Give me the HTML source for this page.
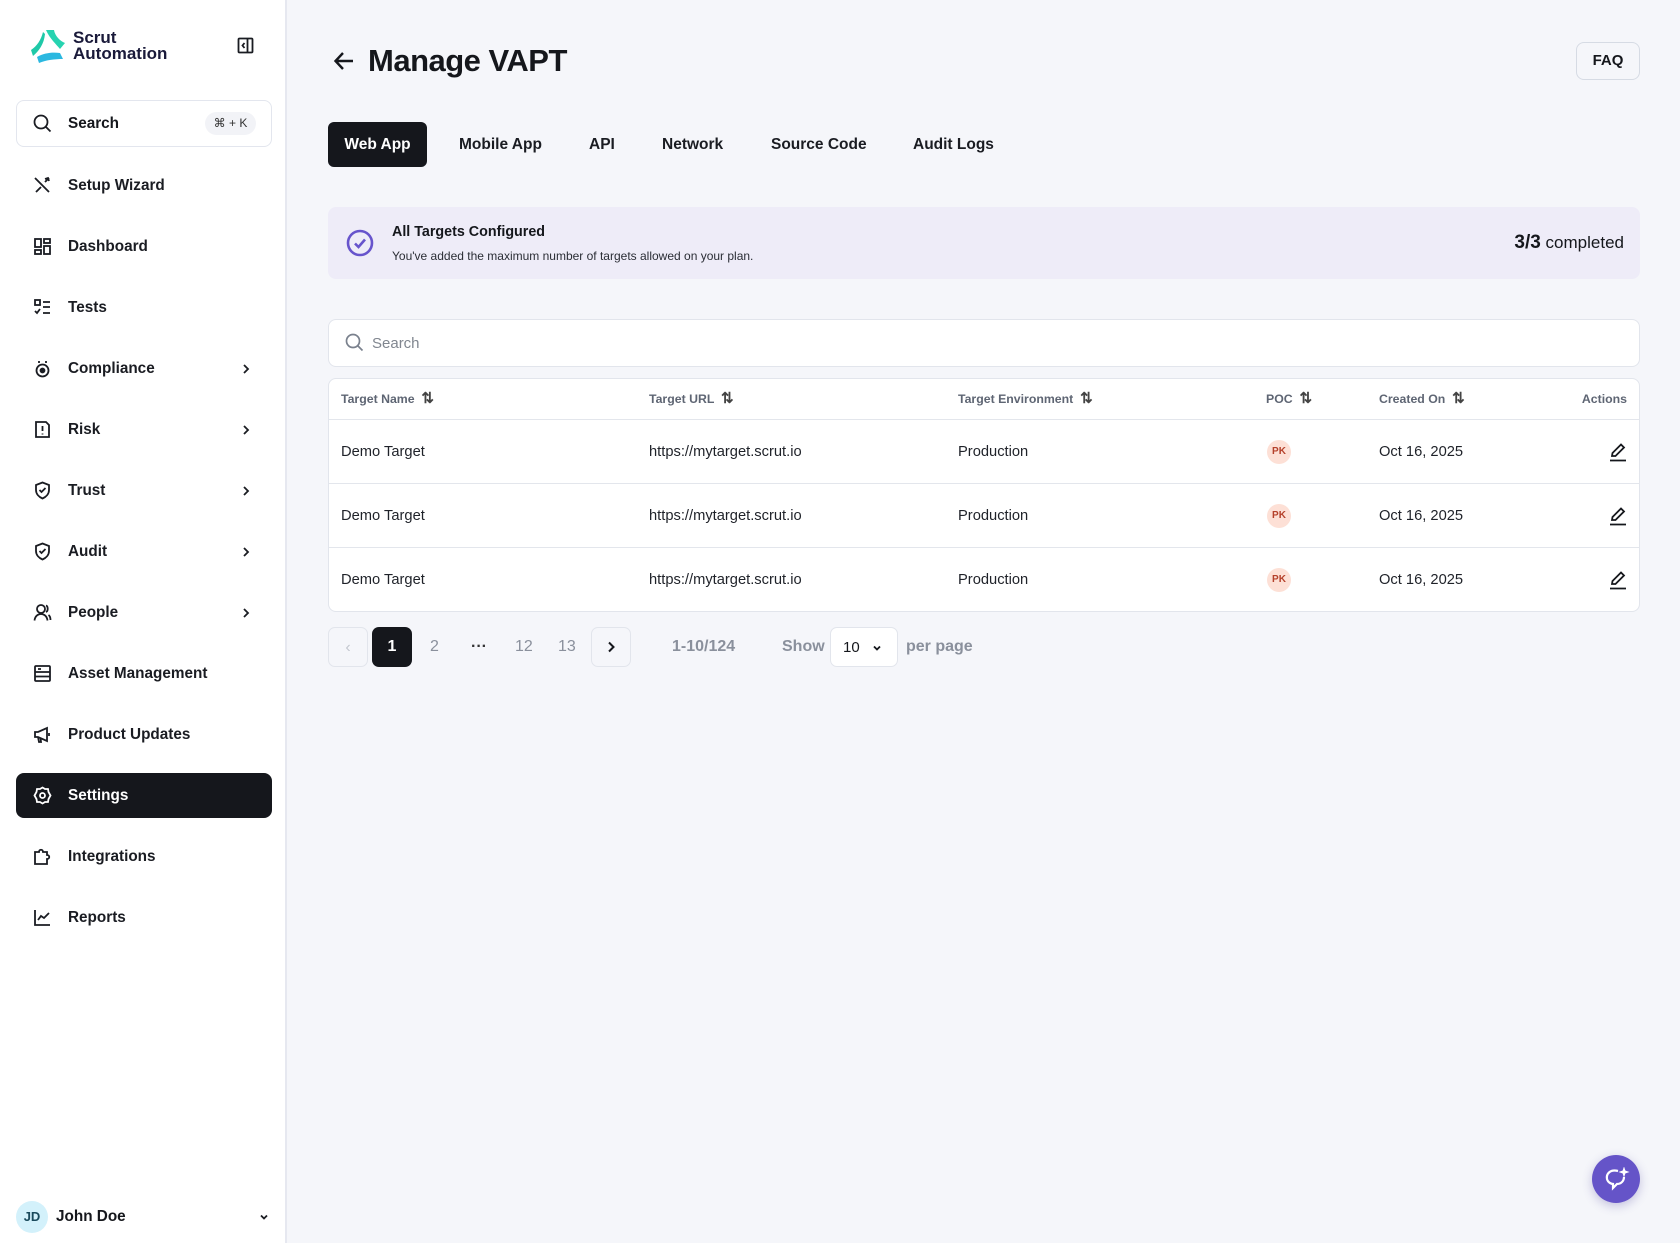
<!DOCTYPE html>
<html><head><meta charset="utf-8"><style>
*{box-sizing:border-box;margin:0;padding:0}
body{width:1680px;height:1243px;background:#f5f6fa;font-family:"Liberation Sans",sans-serif;color:#15171c;position:relative;overflow:hidden}
.a{position:absolute}
#side{left:0;top:0;width:287px;height:1243px;background:#fff;border-right:2px solid #e6e8f0}
.nav{position:absolute;left:16px;width:256px;height:45px;display:flex;align-items:center;font-size:15.3px;font-weight:bold;color:#1a1c22;border-radius:8px}
.nav svg{position:absolute;left:17px}
.nav span{position:absolute;left:52px}
.nav .chev{position:absolute;left:224px}
.act{background:#15171c;color:#fff}
.tab{position:absolute;top:122px;height:45px;line-height:45px;font-size:15.5px;font-weight:bold;color:#1a1c22}
.th{position:absolute;top:0;height:40px;line-height:40px;font-size:12.3px;font-weight:bold;color:#5e6573}
.row{position:absolute;left:0;width:1311px;height:64px;border-top:1px solid #e3e6ec;font-size:14.7px;color:#1f2229}
.row div{position:absolute;top:0;line-height:64px}
.pk{width:24px;height:24px;border-radius:12px;background:#fde0d6;color:#b5412b;font-size:10px;font-weight:bold;text-align:center;line-height:24px!important;top:20px!important}
.pg{position:absolute;top:627px;height:40px;line-height:40px;font-size:16px;color:#8a909c}
</style></head><body>
<div id="side" class="a">
 <svg class="a" style="left:30px;top:29px" width="36" height="34" viewBox="0 0 36 34"><path d="M16 1 L24 1 C25 7 30 12 35 14 L30 20 C26 15 20 10 16 1Z" fill="#27d3b0"/><path d="M13 3 C11 11 7 17 1 21 L3 27 C9 22 14 15 15 5Z" fill="#1fc9a8"/><path d="M7 28 C14 24 22 23 30 24 L33 30 C25 30 16 31 9 34Z" fill="#2bb8e0"/></svg>
 <div class="a" style="left:73px;top:30px;font-size:17px;line-height:15.5px;font-weight:bold;color:#1a1a3a">Scrut<br>Automation</div>
 <svg class="a" style="left:237px;top:37px" width="17" height="17" viewBox="0 0 17 17" fill="none" stroke="#1a1c22" stroke-width="1.8"><rect x="1.5" y="1.5" width="14" height="14" rx="1"/><line x1="10.5" y1="1.5" x2="10.5" y2="15.5"/><path d="M7.5 6 L5.5 8.5 L7.5 11" /></svg>
 <div class="a" style="left:16px;top:100px;width:256px;height:47px;border:1.5px solid #e3e6ee;border-radius:8px"></div>
 <svg class="a" style="left:33px;top:114px" width="19" height="19" viewBox="0 0 19 19" fill="none" stroke="#1a1c22" stroke-width="1.8"><circle cx="8" cy="8" r="6.5"/><line x1="13" y1="13" x2="17.5" y2="17.5"/></svg>
 <div class="a" style="left:68px;top:115px;font-size:15.3px;font-weight:bold">Search</div>
 <div class="a" style="left:205px;top:112px;width:51px;height:23px;border-radius:12px;background:#f2f3f7;font-size:12px;text-align:center;line-height:23px;color:#333">⌘ + K</div>

 <div class="nav" style="top:163px"><svg width="19" height="19" viewBox="0 0 19 19" fill="none" stroke="#1a1c22" stroke-width="1.8"><path d="M2 2 L16 16 M16 2 L12 6 M3 16 L8 11"/><path d="M12 3 L15 2 L16 5"/></svg><span>Setup Wizard</span></div>
 <div class="nav" style="top:224px"><svg width="19" height="19" viewBox="0 0 19 19" fill="none" stroke="#1a1c22" stroke-width="1.8"><rect x="2" y="2" width="6" height="8"/><rect x="11" y="2" width="6" height="4"/><rect x="2" y="13" width="6" height="4"/><rect x="11" y="9" width="6" height="8"/></svg><span>Dashboard</span></div>
 <div class="nav" style="top:285px"><svg width="19" height="19" viewBox="0 0 19 19" fill="none" stroke="#1a1c22" stroke-width="1.8"><rect x="2" y="2" width="5" height="5"/><path d="M2 13 L4 15 L7 11 M10 4 H17 M10 9 H17 M10 15 H17"/></svg><span>Tests</span></div>
 <div class="nav" style="top:346px"><svg width="19" height="19" viewBox="0 0 19 19" fill="none" stroke="#1a1c22" stroke-width="1.8"><circle cx="9.5" cy="11.5" r="6"/><path d="M6 2 V4 M13 2 V4"/><circle cx="9.5" cy="11.5" r="2" fill="#1a1c22"/></svg><span>Compliance</span><svg class="chev" width="12" height="12" viewBox="0 0 12 12" fill="none" stroke="#1a1c22" stroke-width="1.8"><path d="M4 2 L8 6 L4 10"/></svg></div>
 <div class="nav" style="top:407px"><svg width="19" height="19" viewBox="0 0 19 19" fill="none" stroke="#1a1c22" stroke-width="1.8"><path d="M3 2 H13 L16 5 V17 H3Z"/><path d="M9.5 6 V11 M9.5 13.5 V14.5"/></svg><span>Risk</span><svg class="chev" width="12" height="12" viewBox="0 0 12 12" fill="none" stroke="#1a1c22" stroke-width="1.8"><path d="M4 2 L8 6 L4 10"/></svg></div>
 <div class="nav" style="top:468px"><svg width="19" height="19" viewBox="0 0 19 19" fill="none" stroke="#1a1c22" stroke-width="1.8"><path d="M9.5 1.5 L16 4 V9 C16 13 13 16 9.5 17.5 C6 16 3 13 3 9 V4Z"/><path d="M6.5 9 L8.5 11 L12.5 7"/></svg><span>Trust</span><svg class="chev" width="12" height="12" viewBox="0 0 12 12" fill="none" stroke="#1a1c22" stroke-width="1.8"><path d="M4 2 L8 6 L4 10"/></svg></div>
 <div class="nav" style="top:529px"><svg width="19" height="19" viewBox="0 0 19 19" fill="none" stroke="#1a1c22" stroke-width="1.8"><path d="M9.5 1.5 L16 4 V9 C16 13 13 16 9.5 17.5 C6 16 3 13 3 9 V4Z"/><path d="M6.5 9 L8.5 11 L12.5 7"/></svg><span>Audit</span><svg class="chev" width="12" height="12" viewBox="0 0 12 12" fill="none" stroke="#1a1c22" stroke-width="1.8"><path d="M4 2 L8 6 L4 10"/></svg></div>
 <div class="nav" style="top:590px"><svg width="19" height="19" viewBox="0 0 19 19" fill="none" stroke="#1a1c22" stroke-width="1.8"><circle cx="8" cy="6" r="4"/><path d="M1.5 17.5 C2 13 5 11 8 11 C11 11 14 13 14.5 17.5"/><path d="M13 2.5 C15 3 15.5 8 13 9 M15.5 12 C17 13 17.5 15 17.5 17"/></svg><span>People</span><svg class="chev" width="12" height="12" viewBox="0 0 12 12" fill="none" stroke="#1a1c22" stroke-width="1.8"><path d="M4 2 L8 6 L4 10"/></svg></div>
 <div class="nav" style="top:651px"><svg width="19" height="19" viewBox="0 0 19 19" fill="none" stroke="#1a1c22" stroke-width="1.8"><rect x="2" y="2" width="15" height="15" rx="1"/><path d="M2 8 H17 M2 12.5 H17 M5 5 H8"/></svg><span>Asset Management</span></div>
 <div class="nav" style="top:712px"><svg width="19" height="19" viewBox="0 0 19 19" fill="none" stroke="#1a1c22" stroke-width="1.8"><path d="M2 7 V12 H5 L14 16 V3 L5 7Z M5 12 L6 17 H8 L7.5 13 M16 8 V11"/></svg><span>Product Updates</span></div>
 <div class="nav act" style="top:773px"><svg width="19" height="19" viewBox="0 0 19 19" fill="none" stroke="#fff" stroke-width="1.8"><path d="M9.5 1.5 L12 3 L15 3 L15.5 6 L17.5 9.5 L15.5 13 L15 16 L12 16 L9.5 17.5 L7 16 L4 16 L3.5 13 L1.5 9.5 L3.5 6 L4 3 L7 3Z"/><circle cx="9.5" cy="9.5" r="2.5"/></svg><span>Settings</span></div>
 <div class="nav" style="top:834px"><svg width="19" height="19" viewBox="0 0 19 19" fill="none" stroke="#1a1c22" stroke-width="1.8"><path d="M2 17 V5 H6 C6 2 10 2 10 5 H14 V8 C17 8 17 12 14 12 V17Z"/></svg><span>Integrations</span></div>
 <div class="nav" style="top:895px"><svg width="19" height="19" viewBox="0 0 19 19" fill="none" stroke="#1a1c22" stroke-width="1.8"><path d="M2 2 V17 H17 M5 12 L8 8 L11 10 L16 5"/></svg><span>Reports</span></div>

 <div class="a" style="left:16px;top:1201px;width:32px;height:32px;border-radius:16px;background:#d3f1fb;color:#1a4a5c;font-size:13px;font-weight:bold;text-align:center;line-height:32px">JD</div>
 <div class="a" style="left:56px;top:1208px;font-size:15.3px;font-weight:bold">John Doe</div>
 <svg class="a" style="left:258px;top:1211px" width="12" height="12" viewBox="0 0 12 12" fill="none" stroke="#1a1c22" stroke-width="1.8"><path d="M3 4.5 L6 7.5 L9 4.5"/></svg>
</div>

<svg class="a" style="left:332px;top:49px" width="24" height="24" viewBox="0 0 24 24" fill="none" stroke="#15171c" stroke-width="2.4"><path d="M21 12 H4 M11 4 L3.5 12 L11 20"/></svg>
<div class="a" style="left:368px;top:43px;font-size:31px;font-weight:bold;letter-spacing:-0.5px">Manage VAPT</div>
<div class="a" style="left:1576px;top:42px;width:64px;height:38px;border:1.5px solid #d6dbe4;border-radius:8px;text-align:center;line-height:36px;font-size:15px;font-weight:bold">FAQ</div>

<div class="tab" style="left:328px;width:99px;background:#15171c;color:#fff;border-radius:6px;text-align:center">Web App</div>
<div class="tab" style="left:459px">Mobile App</div>
<div class="tab" style="left:589px">API</div>
<div class="tab" style="left:662px">Network</div>
<div class="tab" style="left:771px">Source Code</div>
<div class="tab" style="left:913px">Audit Logs</div>

<div class="a" style="left:328px;top:207px;width:1312px;height:72px;background:#eeecf8;border-radius:8px">
 <svg class="a" style="left:18px;top:22px" width="28" height="28" viewBox="0 0 28 28" fill="none" stroke="#6754cc" stroke-width="2.6"><circle cx="14" cy="14" r="12"/><path d="M9 14.5 L12.5 18 L19 10.5"/></svg>
 <div class="a" style="left:64px;top:17px;font-size:14.3px;font-weight:bold">All Targets Configured</div>
 <div class="a" style="left:64px;top:42px;font-size:12px;color:#2a2d35">You've added the maximum number of targets allowed on your plan.</div>
 <div class="a" style="right:16px;top:25px;font-size:17px"><b style="font-size:19px">3/3</b> completed</div>
</div>

<div class="a" style="left:328px;top:319px;width:1312px;height:48px;background:#fff;border:1.5px solid #e2e5ec;border-radius:8px">
 <svg class="a" style="left:16px;top:13px" width="19" height="19" viewBox="0 0 19 19" fill="none" stroke="#7a818d" stroke-width="1.7"><circle cx="8" cy="8" r="6.5"/><line x1="13" y1="13" x2="17.5" y2="17.5"/></svg>
 <div class="a" style="left:43px;top:15px;font-size:15px;color:#80868f">Search</div>
</div>

<div class="a" style="left:328px;top:378px;width:1312px;height:234px;background:#fff;border:1.5px solid #e2e5ec;border-radius:8px">
 <div class="th" style="left:12px">Target Name &nbsp;<span style="font-size:15px;color:#444">⇅</span></div>
 <div class="th" style="left:320px">Target URL &nbsp;<span style="font-size:15px;color:#444">⇅</span></div>
 <div class="th" style="left:629px">Target Environment &nbsp;<span style="font-size:15px;color:#444">⇅</span></div>
 <div class="th" style="left:937px">POC &nbsp;<span style="font-size:15px;color:#444">⇅</span></div>
 <div class="th" style="left:1050px">Created On &nbsp;<span style="font-size:15px;color:#444">⇅</span></div>
 <div class="th" style="right:12px">Actions</div>
 <div class="row" style="top:40px"><div style="left:12px">Demo Target</div><div style="left:320px">https://mytarget.scrut.io</div><div style="left:629px">Production</div><div class="pk" style="left:938px">PK</div><div style="left:1050px">Oct 16, 2025</div><svg class="a" style="left:1280px;top:22px" width="18" height="20" viewBox="0 0 18 20" fill="none" stroke="#15171c" stroke-width="1.8"><path d="M3 14 L3.5 11 L12 2.5 L15 5.5 L6.5 14Z M1 18.5 H17"/></svg></div>
 <div class="row" style="top:104px"><div style="left:12px">Demo Target</div><div style="left:320px">https://mytarget.scrut.io</div><div style="left:629px">Production</div><div class="pk" style="left:938px">PK</div><div style="left:1050px">Oct 16, 2025</div><svg class="a" style="left:1280px;top:22px" width="18" height="20" viewBox="0 0 18 20" fill="none" stroke="#15171c" stroke-width="1.8"><path d="M3 14 L3.5 11 L12 2.5 L15 5.5 L6.5 14Z M1 18.5 H17"/></svg></div>
 <div class="row" style="top:168px"><div style="left:12px">Demo Target</div><div style="left:320px">https://mytarget.scrut.io</div><div style="left:629px">Production</div><div class="pk" style="left:938px">PK</div><div style="left:1050px">Oct 16, 2025</div><svg class="a" style="left:1280px;top:22px" width="18" height="20" viewBox="0 0 18 20" fill="none" stroke="#15171c" stroke-width="1.8"><path d="M3 14 L3.5 11 L12 2.5 L15 5.5 L6.5 14Z M1 18.5 H17"/></svg></div>
</div>

<div class="pg" style="left:328px;width:40px;border:1.5px solid #e2e5ec;border-radius:7px;text-align:center;color:#c4c8d0">‹</div>
<div class="pg" style="left:372px;width:40px;background:#15171c;border-radius:7px;text-align:center;color:#fff;font-weight:bold">1</div>
<div class="pg" style="left:430px">2</div>
<div class="pg" style="left:471px;color:#333;font-weight:bold">···</div>
<div class="pg" style="left:515px">12</div>
<div class="pg" style="left:558px">13</div>
<div class="pg" style="left:591px;width:40px;border:1.5px solid #e2e5ec;border-radius:7px"><svg class="a" style="left:13px;top:13px" width="12" height="12" viewBox="0 0 12 12" fill="none" stroke="#15171c" stroke-width="2"><path d="M4 1.5 L8.5 6 L4 10.5"/></svg></div>
<div class="pg" style="left:672px;font-weight:bold">1-10/124</div>
<div class="pg" style="left:782px;font-weight:bold">Show</div>
<div class="pg" style="left:830px;width:68px;border:1.5px solid #e2e5ec;border-radius:7px;background:#fff;color:#15171c;padding-left:12px;font-size:15px">10<svg class="a" style="left:40px;top:14px" width="12" height="12" viewBox="0 0 12 12" fill="none" stroke="#15171c" stroke-width="1.8"><path d="M3 4.5 L6 7.5 L9 4.5"/></svg></div>
<div class="pg" style="left:906px;font-weight:bold">per page</div>

<div class="a" style="left:1592px;top:1155px;width:48px;height:48px;border-radius:24px;background:#6554c8;box-shadow:0 3px 10px rgba(80,70,160,.3)">
 <svg class="a" style="left:12px;top:12px" width="26" height="24" viewBox="0 0 26 24" fill="none" stroke="#fff" stroke-width="2.2"><path d="M14 4 C6 2 2 7 3 12 C4 16 8 17 9 17 L9 21 L13 17 C17 17 20 14 20 10"/><path d="M20 1 L21 4 L24 5 L21 6 L20 9 L19 6 L16 5 L19 4Z" fill="#fff" stroke-width="1"/></svg>
</div>
</body></html>
